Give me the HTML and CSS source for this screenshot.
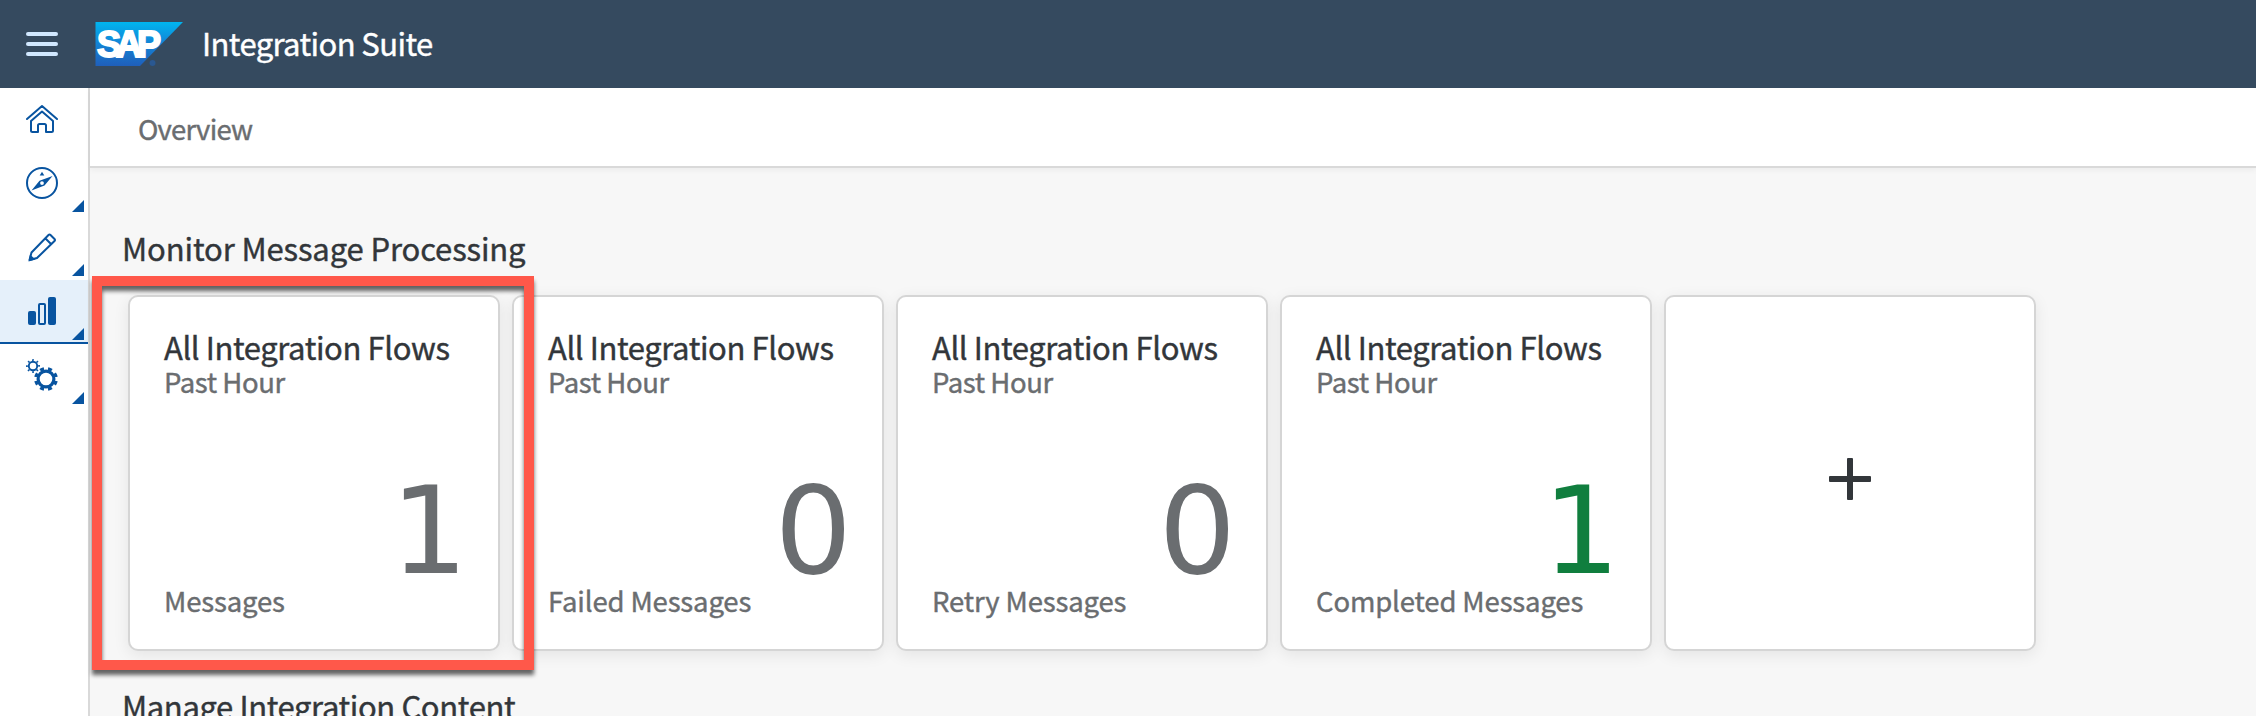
FILE: index.html
```html
<!DOCTYPE html>
<html lang="en">
<head>
<meta charset="utf-8">
<title>Integration Suite</title>
<link rel="stylesheet" href="styles.css">
</head>
<body>
<header class="shell">
  <svg class="menu" width="32" height="24" viewBox="0 0 32 24"><rect width="32" height="4" rx="2"/><rect y="10" width="32" height="4" rx="2"/><rect y="20" width="32" height="4" rx="2"/></svg>
  <svg class="logo" width="88" height="44" viewBox="0 0 88 44">
    <defs><linearGradient id="sky" x1="0" y1="0" x2="0" y2="1"><stop offset="0" stop-color="#00b5ef"/><stop offset=".45" stop-color="#1287d8"/><stop offset="1" stop-color="#1f5fbb"/></linearGradient></defs>
    <path d="M-.5 0H87L44 44H-.5Z" fill="url(#sky)"/>
    <circle cx="56.500" cy="41" r="3" fill="#2a5891"/>
    <text class="logo-text" x="1" y="34.500" textLength="64" lengthAdjust="spacing">SAP</text>
  </svg>
  <h1 class="product">Integration Suite</h1>
</header>
<div class="app">
  <nav class="side">
    <a class="nav"><svg width="32" height="32" viewBox="0 0 32 32" class="line"><path d="M1 15 16 2 31 15M5 17.500V26.500Q5 28 6.500 28H12V21.500Q12 20 13.500 20H18.500Q20 20 20 21.500V28H25.500Q27 28 27 26.500V17L16 7.500 5 17"/></svg></a>
    <a class="nav more"><svg width="32" height="32" viewBox="0 0 32 32"><circle class="line" cx="16" cy="16" r="15"/><path d="M16 4.800 18.300 8.500H13.700Z"/><path fill-rule="evenodd" d="M26.500 9 18.500 18.500 5.500 23.500 13.500 13.800ZM16 14.200a1.900 1.900 0 1 0 0 3.800 1.900 1.900 0 0 0 0-3.800Z"/></svg></a>
    <a class="nav more"><svg width="32" height="32" viewBox="0 0 32 32"><path class="line" d="M3.500 29 5.500 21.500 22.500 4Q23.500 3 24.500 4L28.500 8Q29.500 9 28.500 10L11 27ZM19.500 7.500 25 13"/><path d="M2.500 30.500 4 23.500 9.500 28.500Z"/></svg></a>
    <a class="nav more active"><svg width="32" height="32" viewBox="0 0 32 32"><rect x="2" y="16" width="8" height="14" rx="2"/><rect class="line" x="13" y="9" width="6" height="20" rx="1"/><rect x="22" y="2" width="8" height="28" rx="2"/></svg></a>
    <a class="nav more"><svg width="32" height="32" viewBox="0 0 32 32"><circle class="ring" cx="20" cy="20" r="7.900"/><circle class="teeth" cx="20" cy="20" r="10.300" pathLength="16" stroke-dasharray="1 1" transform="rotate(11.250 20 20)"/><circle class="ring-s" cx="7" cy="7" r="4.200"/><circle class="teeth-s" cx="7" cy="7" r="6" pathLength="24" stroke-dasharray="1 2" transform="rotate(-7.500 7 7)"/></svg></a>
  </nav>
  <main class="main">
    <div class="crumb"><span class="crumb-text">Overview</span></div>
    <h2 class="heading monitor">Monitor Message Processing</h2>
    <section class="tiles">
      <article class="tile"><h3 class="title">All Integration Flows</h3><p class="sub">Past Hour</p><p class="count">1</p><p class="foot">Messages</p><i class="mark"></i></article>
      <article class="tile"><h3 class="title">All Integration Flows</h3><p class="sub">Past Hour</p><p class="count">0</p><p class="foot">Failed Messages</p></article>
      <article class="tile"><h3 class="title">All Integration Flows</h3><p class="sub">Past Hour</p><p class="count">0</p><p class="foot">Retry Messages</p></article>
      <article class="tile"><h3 class="title">All Integration Flows</h3><p class="sub">Past Hour</p><p class="count good">1</p><p class="foot">Completed Messages</p></article>
      <article class="tile add"><svg width="42" height="42" viewBox="0 0 42 42"><rect x="18" width="6" height="42" rx="1"/><rect y="18" width="42" height="6" rx="1"/></svg></article>
    </section>
    <h2 class="heading manage">Manage Integration Content</h2>
  </main>
</div>
</body>
</html>
```

FILE: styles.css
```css
* { box-sizing: border-box; margin: 0; font-weight: 400; }
body { height: 716px; overflow: hidden; background: #f7f7f7; font-family: "Noto Sans CJK JP", "Noto Sans", sans-serif; color: #32363a; white-space: nowrap; -webkit-text-stroke: .4px; }
.shell { height: 88px; background: #354a5f; display: flex; align-items: center; padding-left: 26px; }
.menu { fill: #d1e8ff; }
.logo { margin-left: 38px; overflow: visible; }
.logo-text { font: 700 36px "Liberation Sans", sans-serif; fill: #fff; stroke: #fff; stroke-width: 2; }
.product { margin-left: 18px; padding-bottom: 3px; font-size: 31px; line-height: 44px; letter-spacing: -.6px; color: #fff; }
.app { display: flex; height: 628px; overflow: hidden; }
.side { width: 90px; flex: none; background: #fff; border-right: 2px solid #d9d9d9; }
.nav { display: flex; align-items: center; height: 64px; padding-left: 26px; position: relative; fill: #0854a0; }
.more { padding-bottom: 2px; }
.line { fill: none; stroke: #0854a0; stroke-width: 2; stroke-linejoin: round; stroke-linecap: round; }
.ring { fill: none; stroke: #0854a0; stroke-width: 3.2; }
.teeth { fill: none; stroke: #0854a0; stroke-width: 3.2; }
.ring-s { fill: none; stroke: #0854a0; stroke-width: 1.9; }
.teeth-s { fill: none; stroke: #0854a0; stroke-width: 2; }
.more::after { content: ""; position: absolute; right: 4px; bottom: 4px; width: 12px; height: 12px; background: #0854a0; clip-path: polygon(100% 0, 100% 100%, 0 100%); }
.active { background: #e5f0fa; box-shadow: inset 0 -2px #0854a0; }
.main { flex: 1; }
.crumb { height: 80px; background: #fff; border-bottom: 2px solid #d9d9d9; padding: 20px 0 0 48px; box-shadow: 0 2px 6px rgba(0,0,0,.05); }
.crumb-text { display: block; font-size: 27.500px; line-height: 40px; letter-spacing: -.8px; color: #6a6d70; }
.heading { font-size: 31px; line-height: 44px; padding-left: 32px; }
.monitor { margin-top: 58px; letter-spacing: -.12px; }
.tiles { display: flex; gap: 12px; margin: 25px 0 0 38px; }
.tile { width: 372px; height: 356px; flex: none; position: relative; background: #fff; border: 2px solid #d5d5d5; border-radius: 10px; padding: 28px 30px 0 34px; box-shadow: 0 4px 16px rgba(0,0,0,.08); }
.title { font-size: 31px; line-height: 44px; letter-spacing: -.4px; }
.sub { font-size: 27.500px; line-height: 24px; letter-spacing: -.4px; color: #6a6d70; }
.count { margin-top: 77px; font: 122px/122px "DejaVu Sans", sans-serif; color: #6a6d70; text-align: right; -webkit-text-stroke: 0; }
.good { color: #107e3e; }
.foot { margin-top: -12px; font-size: 27.500px; line-height: 40px; letter-spacing: -.15px; color: #6a6d70; }
.add { display: flex; align-items: center; justify-content: center; padding: 12px 0 0; fill: #32363a; }
.mark { position: absolute; z-index: 2; left: -38px; top: -21px; width: 442px; height: 394px; border: 10px solid #ff584a; filter: drop-shadow(0 5px 2px rgba(0,0,0,.6)); }
.manage { margin-top: 33px; letter-spacing: -.38px; }
```
